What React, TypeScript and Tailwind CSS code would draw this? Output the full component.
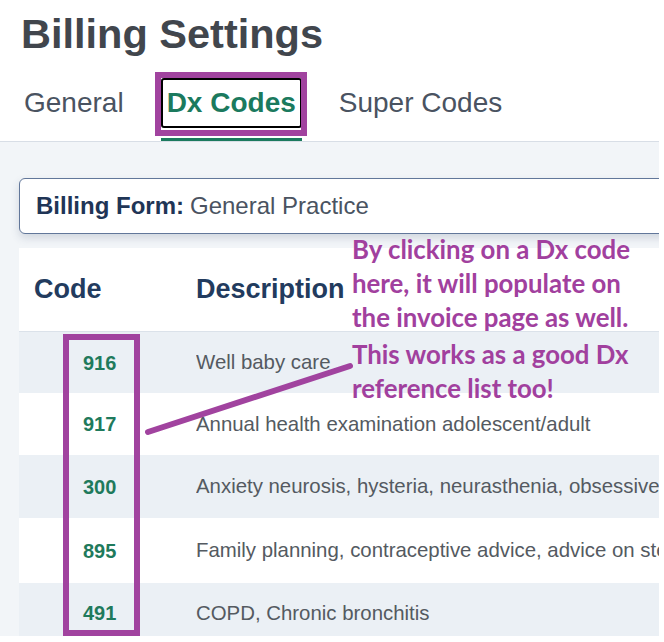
const rows = [
  { code: '916', desc: 'Well baby care', h: 'h-[61px]', alt: true },
  { code: '917', desc: 'Annual health examination adolescent/adult', h: 'h-[62px]', alt: false },
  { code: '300', desc: 'Anxiety neurosis, hysteria, neurasthenia, obsessive compulsive neurosis', h: 'h-[63px]', alt: true },
  { code: '895', desc: 'Family planning, contraceptive advice, advice on sterilization', h: 'h-[65px]', alt: false },
  { code: '491', desc: 'COPD, Chronic bronchitis', h: 'h-[60px]', alt: true },
];

const tabs = [
  { label: 'General', active: false },
  { label: 'Dx Codes', active: true },
  { label: 'Super Codes', active: false },
];

const Tab = ({ label, active }: { label: string; active: boolean }) => (
  <div className="flex flex-col">
    <button
      className={
        'border-2 rounded-[3px] px-[4px] py-[9px] text-[28px] leading-[28px] ' +
        (active ? 'border-black text-[#1b7a5e] font-bold' : 'border-transparent text-[#4a5361]')
      }
    >
      {label}
    </button>
    <div className={'mt-[10px] h-[3px] ' + (active ? 'bg-[#1b7a5e]' : 'bg-transparent')} />
  </div>
);

export default function App() {
  return (
    <div className="relative w-[664px] h-[642px] overflow-hidden bg-white font-['Liberation_Sans',Arial,sans-serif]">
      <div className="w-[659px] h-[636px] overflow-hidden flex flex-col">
        {/* header */}
        <div className="pt-[13px] pl-[21px]">
          <h1 className="text-[41.5px] leading-[42px] font-bold text-[#41464d]">Billing Settings</h1>
        </div>

        {/* tabs */}
        <div className="mt-[23px] flex gap-[31px] pl-[18px] border-b border-[#d8dee6]">
          {tabs.map((t) => (
            <Tab key={t.label} {...t} />
          ))}
        </div>

        {/* content */}
        <div className="flex-1 bg-[#f2f5f8] pl-[19px] pt-[36px]">
          <div className="mr-[-12px] h-[56px] flex items-center pl-[16px] bg-white border-[1.5px] border-[#62779a] rounded-[6px] shadow-[0_4px_8px_rgba(60,80,110,0.18)] text-[24px]">
            <span className="font-bold text-[#1f3556]">Billing Form:</span>
            <span className="ml-[6px] text-[#4a5361]">General Practice</span>
          </div>

          <div className="mt-[14px] bg-white">
            <div className="grid grid-cols-[177px_1fr] h-[84px] items-center border-b border-[#dbe2ea] text-[27px] font-bold text-[#223b5e]">
              <div className="pl-[15px]">Code</div>
              <div>Description</div>
            </div>
            {rows.map((r) => (
              <div
                key={r.code}
                className={'grid grid-cols-[177px_1fr] items-center ' + r.h + ' ' + (r.alt ? 'bg-[#ebf0f5]' : 'bg-white')}
              >
                <div className="pl-[64px] text-[20px] font-bold text-[#1f7a5c]">{r.code}</div>
                <div className="text-[20.4px] text-[#545a61] whitespace-nowrap overflow-hidden">{r.desc}</div>
              </div>
            ))}
          </div>
        </div>
      </div>

      {/* annotations */}
      <div className="absolute left-[155px] top-[72px] w-[152px] h-[64px] border-[6px] border-[#a1439f]" />
      <div className="absolute left-[63px] top-[334px] w-[77px] h-[302px] border-[6px] border-[#a1439f]" />
      <svg className="absolute left-0 top-0" width="664" height="642">
        <line x1="148" y1="432" x2="350" y2="366" stroke="#a1439f" strokeWidth="6" strokeLinecap="round" />
      </svg>
      <div className="absolute left-[352px] top-[232px] font-['Lato',sans-serif] font-bold text-[25.8px] leading-[34px] text-[#a1409e] whitespace-nowrap">
        <div>By clicking on a Dx code</div>
        <div>here, it will populate on</div>
        <div>the invoice page as well.</div>
        <div className="mt-[3px]">This works as a good Dx</div>
        <div>reference list too!</div>
      </div>
    </div>
  );
}
